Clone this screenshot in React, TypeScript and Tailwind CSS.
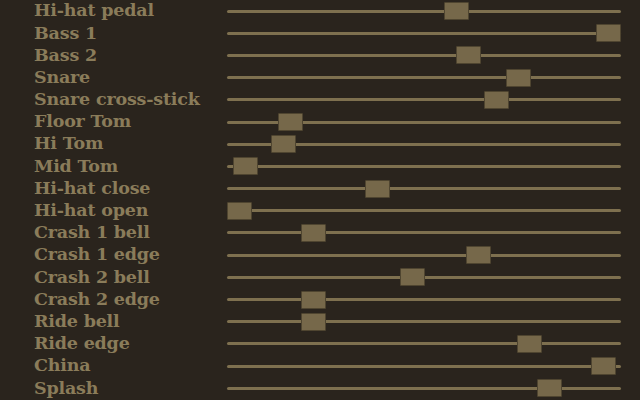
const pads = [
  { name: "Hi-hat pedal", value: 0.588 },
  { name: "Bass 1", value: 1 },
  { name: "Bass 2", value: 0.62 },
  { name: "Snare", value: 0.756 },
  { name: "Snare cross-stick", value: 0.696 },
  { name: "Floor Tom", value: 0.138 },
  { name: "Hi Tom", value: 0.119 },
  { name: "Mid Tom", value: 0.016 },
  { name: "Hi-hat close", value: 0.374 },
  { name: "Hi-hat open", value: 0 },
  { name: "Crash 1 bell", value: 0.2 },
  { name: "Crash 1 edge", value: 0.648 },
  { name: "Crash 2 bell", value: 0.47 },
  { name: "Crash 2 edge", value: 0.2 },
  { name: "Ride bell", value: 0.2 },
  { name: "Ride edge", value: 0.786 },
  { name: "China", value: 0.986 },
  { name: "Splash", value: 0.84 },
];

const Slider = ({ value }: { value: number }) => (
  <div className="relative h-full flex items-center">
    {/* track */}
    <div className="h-[3px] w-full bg-[#7e704f] rounded-sm" />
    {/* thumb */}
    <div
      className="absolute top-1/2 -translate-y-1/2 w-[25px] h-[18px] bg-[#76684a] border border-[#4f4530] rounded-[1px]"
      style={{ left: `${value * 369}px` }}
    />
  </div>
);

export default function App() {
  return (
    <div
      className="w-[640px] h-[400px] overflow-hidden bg-[#2a241d] pl-[34px] pr-[19px]"
      style={{ fontFamily: '"DejaVu Serif", serif' }}
    >
      {pads.map((p) => (
        <div key={p.name} className="grid grid-cols-[193px_394px] h-[22.2px] items-center">
          <span className="text-[17.5px] font-bold text-[#8a7c5a] leading-none whitespace-nowrap tracking-[-0.2px]">
            {p.name}
          </span>
          <Slider value={p.value} />
        </div>
      ))}
    </div>
  );
}
